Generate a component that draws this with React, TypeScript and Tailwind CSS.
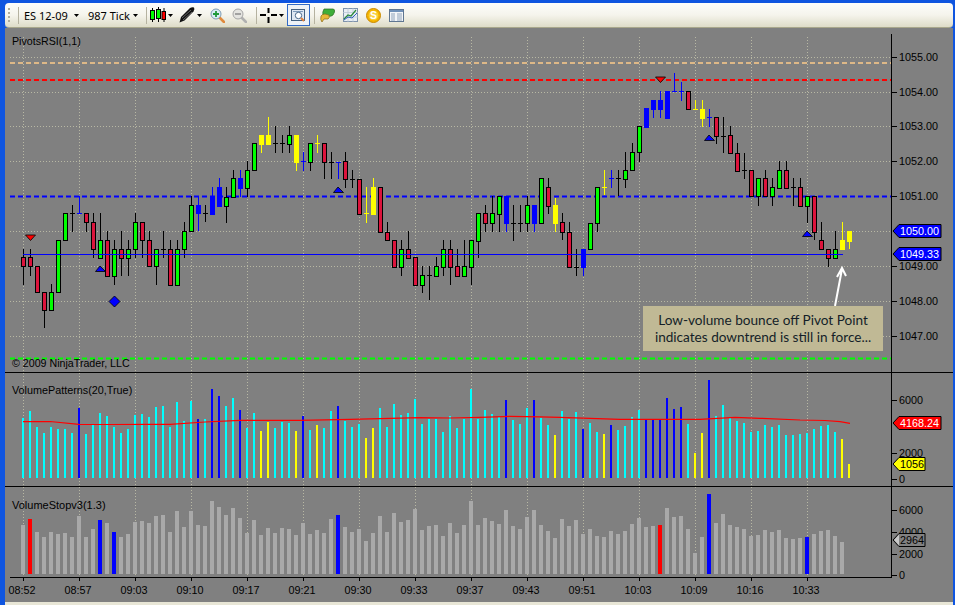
const gridX = Array.from({ length: 15 }, (_, k) => 23 + 56 * k);
const barX = (i: number) => 23 + 7 * i;

const times = ["08:52", "08:57", "09:03", "09:10", "09:17", "09:21", "09:30", "09:33", "09:37", "09:43", "09:51", "10:03", "10:09", "10:16", "10:33"];

const prices: [string, number][] = [
  ["1055.00", 57], ["1054.00", 92], ["1053.00", 126], ["1052.00", 161], ["1051.00", 196],
  ["1049.00", 266], ["1048.00", 301], ["1047.00", 336],
];

// high, body top, body bottom, low, colour. doji when top === bottom
type Candle = [number, number, number, number, "g" | "r" | "b" | "y" | "k"];
const candles: Candle[] = [
  [249, 257, 266, 285, "r"], [249, 257, 266, 276, "r"], [266, 266, 292, 292, "r"], [292, 292, 310, 328, "r"],
  [284, 292, 310, 310, "g"], [240, 240, 292, 292, "g"], [213, 213, 240, 240, "g"], [205, 213, 213, 232, "k"],
  [196, 213, 213, 213, "b"], [213, 213, 222, 232, "r"], [213, 222, 249, 258, "r"], [213, 240, 258, 258, "g"],
  [231, 240, 276, 276, "r"], [240, 249, 276, 285, "g"], [231, 249, 258, 276, "r"], [240, 249, 258, 276, "g"],
  [213, 222, 249, 258, "g"], [222, 222, 240, 258, "r"], [231, 240, 266, 266, "r"], [249, 249, 266, 285, "g"],
  [231, 249, 249, 258, "k"], [240, 249, 285, 285, "r"], [240, 249, 285, 285, "g"], [222, 231, 249, 258, "g"],
  [196, 205, 231, 231, "g"], [196, 205, 213, 231, "b"], [205, 213, 213, 222, "k"], [187, 196, 214, 214, "b"],
  [178, 187, 206, 206, "b"], [187, 197, 206, 223, "g"], [170, 178, 197, 197, "g"], [170, 178, 188, 197, "b"],
  [161, 170, 188, 197, "g"], [143, 143, 170, 170, "g"], [135, 135, 144, 153, "y"], [117, 135, 144, 144, "y"],
  [126, 143, 143, 153, "k"], [135, 143, 143, 153, "k"], [126, 135, 144, 153, "g"], [135, 135, 162, 171, "y"],
  [152, 161, 161, 171, "b"], [143, 143, 162, 171, "g"], [135, 143, 143, 153, "y"], [143, 143, 162, 179, "r"],
  [152, 162, 162, 179, "k"], [162, 162, 162, 179, "b"], [152, 161, 179, 188, "r"], [170, 179, 179, 188, "k"],
  [179, 179, 214, 214, "r"], [187, 213, 213, 223, "y"], [178, 187, 214, 214, "y"], [187, 187, 232, 232, "r"],
  [222, 232, 240, 240, "r"], [240, 240, 267, 267, "r"], [240, 249, 267, 276, "g"], [231, 249, 258, 258, "r"],
  [257, 257, 285, 285, "r"], [266, 275, 285, 293, "g"], [266, 275, 275, 300, "k"], [257, 266, 276, 276, "g"],
  [240, 249, 267, 276, "g"], [240, 249, 267, 285, "r"], [249, 266, 276, 276, "r"], [240, 266, 276, 276, "g"],
  [240, 240, 267, 285, "g"], [213, 213, 241, 258, "g"], [205, 213, 223, 232, "r"], [196, 213, 223, 232, "g"],
  [196, 196, 214, 232, "g"], [196, 196, 223, 232, "b"], [205, 223, 223, 241, "k"], [205, 223, 223, 232, "k"],
  [196, 205, 223, 232, "g"], [205, 205, 223, 232, "b"], [178, 178, 223, 223, "g"], [178, 187, 206, 214, "r"],
  [198, 205, 223, 232, "y"], [213, 222, 232, 240, "r"], [222, 232, 267, 267, "r"], [249, 267, 267, 276, "k"],
  [249, 249, 267, 276, "b"], [223, 223, 249, 249, "g"], [187, 187, 223, 232, "g"], [170, 187, 187, 195, "y"],
  [170, 178, 178, 188, "b"], [170, 178, 178, 196, "k"], [152, 170, 179, 188, "g"], [143, 152, 170, 170, "g"],
  [126, 126, 152, 162, "g"], [108, 108, 127, 127, "b"], [100, 100, 109, 118, "b"], [91, 100, 109, 118, "b"],
  [91, 91, 118, 118, "b"], [73, 91, 91, 91, "b"], [82, 91, 91, 101, "b"], [91, 91, 109, 109, "r"],
  [100, 109, 109, 109, "y"], [100, 109, 118, 127, "y"], [109, 117, 117, 127, "b"], [117, 117, 136, 144, "r"],
  [117, 136, 136, 153, "k"], [126, 135, 153, 153, "r"], [143, 153, 171, 171, "r"], [153, 170, 170, 179, "k"],
  [170, 170, 196, 196, "r"], [178, 178, 196, 206, "g"], [170, 178, 196, 196, "r"], [178, 187, 196, 206, "g"],
  [161, 170, 188, 188, "g"], [161, 170, 188, 188, "r"], [178, 187, 187, 206, "k"], [178, 187, 206, 206, "r"],
  [196, 196, 206, 223, "g"], [196, 196, 232, 240, "r"], [222, 240, 249, 249, "r"], [249, 249, 258, 267, "r"],
  [231, 249, 258, 258, "g"], [222, 240, 249, 249, "y"], [231, 231, 241, 249, "y"],
];

const volumes = [
  60, 67, 51, 45, 51, 49, 49, 45, 70, 44, 54, 65, 62, 51, 45, 49, 63, 64, 61, 71, 72, 51, 76, 57, 77, 59, 59, 89, 82, 72, 80, 68, 50, 65, 47, 56, 50, 56, 55, 47, 62, 48, 53,
  50, 67, 72, 57, 51, 54, 40, 50, 70, 51, 74, 63, 65, 79, 54, 59, 59, 46, 62, 50, 59, 89, 59, 68, 64, 61, 78, 58, 54, 70, 78, 60, 53, 43, 67, 59, 66, 49, 55, 46, 44, 53, 48, 52,
  61, 68, 58, 58, 59, 80, 69, 71, 54, 25, 45, 98, 62, 73, 60, 57, 55, 46, 47, 53, 51, 53, 43, 43, 44, 45, 49, 52, 53, 46, 39, 14,
];
const volumeBlue = [8, 25, 27, 28, 31, 40, 45, 69, 73, 80, 84, 89, 90, 91, 92, 93, 94, 98];
const volumeYellow = [34, 35, 39, 42, 49, 50, 76, 83, 96, 97, 117, 118];

const stops = [
  49, 55, 42, 37, 42, 40, 41, 37, 58, 37, 45, 54, 51, 42, 37, 40, 52, 53, 51, 58, 59, 42, 63, 47, 63, 49, 48, 73, 67, 59, 66, 56, 41, 54, 39, 46, 41, 46, 45, 39, 51, 40, 44,
  41, 55, 59, 47, 42, 45, 33, 41, 58, 42, 61, 52, 54, 65, 44, 48, 49, 38, 51, 41, 49, 73, 49, 56, 53, 50, 64, 48, 45, 57, 64, 49, 43, 36, 55, 48, 54, 40, 45, 38, 37, 43, 40, 43,
  50, 56, 47, 48, 49, 66, 57, 58, 45, 21, 37, 80, 51, 60, 49, 47, 45, 38, 39, 44, 42, 44, 36, 35, 36, 37, 40, 43, 44, 38, 32,
];
const stopRed = [1, 91];
const stopBlue = [11, 13, 45, 98, 112];

const smaLine =
  "23,421.7 50,421.5 79,424.3 110,424.5 150,424.3 170,424.3 205,422 240,420.3 300,420.3 350,419.3 380,418.7 420,417.7 450,418 480,417.3 510,416.3 540,416.8 560,417.3 590,418.3 620,419.3 660,419.3 700,419.3 735,417.3 760,418.3 800,420 825,420.5 840,421.7 850,423.3";

const fills = { g: "#00ff00", r: "#dc143c", b: "#0000ff", y: "#ffff00", k: "#000000" };

const axisFont = { fontFamily: '"Liberation Sans", Arial, sans-serif', fontSize: 10.8 };

function CandleBar({ c, i }: { c: Candle; i: number }) {
  const [hi, top, bot, lo, col] = c;
  const x = barX(i);
  const outlined = col === "g" || col === "r";
  const stroke = outlined || col === "k" ? "#000000" : fills[col];
  return (
    <g>
      <rect x={x} y={hi} width={1} height={lo - hi} fill={stroke} />
      {top === bot ? (
        <rect x={x - 2} y={top} width={5} height={1} fill={stroke} />
      ) : (
        <>
          <rect x={x - 2} y={top} width={5} height={bot - top + 1} fill={stroke} />
          {outlined && <rect x={x - 1} y={top + 1} width={3} height={bot - top - 1} fill={fills[col]} />}
        </>
      )}
    </g>
  );
}

function Flag({ y, w, fill, text, label, tip }: { y: number; w: number; fill: string; text: string; label: string; tip?: string }) {
  const x = 893;
  return (
    <g>
      <polygon
        points={`${x},${y} ${x + 6},${y - 6.5} ${x + w},${y - 6.5} ${x + w},${y + 6.5} ${x + 6},${y + 6.5}`}
        fill={fill}
        stroke="#000000"
      />
      {tip && <polygon points={`${x + 1},${y} ${x + 6},${y - 5.5} ${x + 6},${y + 5.5}`} fill={tip} />}
      <text x={x + 7} y={y + 4} fill={text} style={axisFont}>
        {label}
      </text>
    </g>
  );
}

function AxisTick({ y, label }: { y: number; label: string }) {
  return (
    <g>
      <rect x={892} y={y} width={5} height={1} fill="#000000" />
      <text x={899} y={y + 4} fill="#000000" style={axisFont}>
        {label}
      </text>
    </g>
  );
}

function Marker({ x, y, up }: { x: number; y: number; up: boolean }) {
  return up ? (
    <polygon points={`${x},${y} ${x + 5.5},${y + 5.5} ${x - 4.5},${y + 5.5}`} fill="#0000ff" stroke="#000000" strokeWidth={0.8} />
  ) : (
    <polygon points={`${x - 4.5},${y} ${x + 5.5},${y} ${x + 0.5},${y + 5.5}`} fill="#ff0000" stroke="#000000" strokeWidth={0.8} />
  );
}

function PricePanel() {
  return (
    <div className="relative h-[345px] border-b border-black">
      <svg width={948} height={344} viewBox="5 28 948 344" className="block">
        {gridX.map((x) => (
          <line key={x} x1={x + 0.5} y1={37} x2={x + 0.5} y2={372} stroke="#b8b8a4" strokeDasharray="1 2" />
        ))}
        {[57, 92, 126, 161, 231, 266, 301, 336].map((y) => (
          <line key={y} x1={10} y1={y + 0.5} x2={891} y2={y + 0.5} stroke="#b8b8a4" strokeDasharray="1 2" />
        ))}
        <line x1={10} y1={63} x2={891} y2={63} stroke="#deb887" strokeWidth={2} strokeDasharray="5 3" />
        <line x1={10} y1={80} x2={891} y2={80} stroke="#ff0000" strokeWidth={2} strokeDasharray="5 3" />
        <line x1={10} y1={196.5} x2={891} y2={196.5} stroke="#0000ff" strokeWidth={2} strokeDasharray="5 3" />
        <line x1={10} y1={358.5} x2={891} y2={358.5} stroke="#00ff00" strokeWidth={2} strokeDasharray="5 3" />
        {candles.map((c, i) => (
          <CandleBar key={i} c={c} i={i} />
        ))}
        <rect x={23} y={254} width={820} height={1} fill="#0000ff" />
        <Marker x={30} y={235} up={false} />
        <Marker x={100} y={266} up />
        <Marker x={338} y={187} up />
        <Marker x={660} y={77} up={false} />
        <Marker x={709} y={135} up />
        <Marker x={807} y={231} up />
        <polygon points="114.5,296 120,301.5 114.5,307 109,301.5" fill="#0000ff" stroke="#000000" strokeWidth={0.8} />
        <path d="M835 306 L842 269 M837 277 L842 268 L846 276" fill="none" stroke="#ffffff" strokeWidth={2} />
        <rect x={891} y={34} width={1} height={338} fill="#000000" />
        {prices.map(([label, y]) => (
          <AxisTick key={label} y={y} label={label} />
        ))}
        <Flag y={231} w={48} fill="#0000ff" text="#ffffff" label="1050.00" />
        <Flag y={254} w={48} fill="#0000ff" text="#ffffff" label="1049.33" />
      </svg>
      <div className="absolute left-[7px] top-[5px] text-[10.67px] text-black">PivotsRSI(1,1)</div>
      <div className="absolute left-[7px] top-[327px] text-[10.67px] text-black">© 2009 NinjaTrader, LLC</div>
      <div className="absolute left-[638px] top-[278px] flex h-[45px] w-[240px] flex-col items-center justify-center bg-[#c0b995] font-['Lato',sans-serif] text-[13.6px] leading-[17px] text-[#141e28]">
        <div>Low-volume bounce off Pivot Point</div>
        <div>indicates downtrend is still in force...</div>
      </div>
    </div>
  );
}

function VolumePanel() {
  return (
    <div className="relative h-[114px] border-b border-black">
      <svg width={948} height={113} viewBox="5 373 948 113" className="block">
        {gridX.map((x) => (
          <line key={x} x1={x + 0.5} y1={373} x2={x + 0.5} y2={486} stroke="#b8b8a4" strokeDasharray="1 2" />
        ))}
        {volumes.map((h, i) => (
          <rect
            key={i}
            x={barX(i) - 1}
            y={478 - h}
            width={2}
            height={h}
            fill={volumeBlue.includes(i) ? "#0000ff" : volumeYellow.includes(i) ? "#ffff00" : "#00ffff"}
          />
        ))}
        <polyline points={smaLine} fill="none" stroke="#ff0000" strokeWidth={1.2} />
        <rect x={891} y={373} width={1} height={113} fill="#000000" />
        <AxisTick y={400} label="6000" />
        <AxisTick y={453} label="2000" />
        <AxisTick y={479} label="0" />
        <Flag y={423} w={48} fill="#ff0000" text="#ffffff" label="4168.24" />
        <Flag y={464} w={32} fill="#ffff00" text="#000000" label="1056" />
      </svg>
      <div className="absolute left-[7px] top-[9px] text-[10.8px] text-black">VolumePatterns(20,True)</div>
    </div>
  );
}

function StopPanel() {
  return (
    <div className="relative h-[115px]">
      <svg width={948} height={115} viewBox="5 487 948 115" className="block">
        {gridX.map((x) => (
          <line key={x} x1={x + 0.5} y1={487} x2={x + 0.5} y2={577} stroke="#b8b8a4" strokeDasharray="1 2" />
        ))}
        {stops.map((h, i) => (
          <rect
            key={i}
            x={barX(i) - 2}
            y={574 - h}
            width={4}
            height={h}
            fill={stopRed.includes(i) ? "#ff0000" : stopBlue.includes(i) ? "#0000ff" : "#a9a9a9"}
          />
        ))}
        <rect x={10} y={577} width={882} height={1} fill="#000000" />
        <rect x={891} y={487} width={1} height={91} fill="#000000" />
        {gridX.map((x, k) => (
          <g key={x}>
            <rect x={x} y={578} width={1} height={3} fill="#000000" />
            <text x={x - 1} y={594} textAnchor="middle" fill="#000000" style={axisFont}>
              {times[k]}
            </text>
          </g>
        ))}
        <AxisTick y={510} label="6000" />
        <AxisTick y={532} label="4000" />
        <AxisTick y={554} label="2000" />
        <AxisTick y={575} label="0" />
        <Flag y={540} w={32} fill="#808080" text="#000000" label="2964" tip="#c8c8c8" />
      </svg>
      <div className="absolute left-[7px] top-[10px] text-[11px] text-black">VolumeStopv3(1.3)</div>
    </div>
  );
}

function Caret({ ml }: { ml: string }) {
  return (
    <svg width={5} height={3} viewBox="0 0 5 3" className={ml}>
      <polygon points="0,0 5,0 2.5,3" fill="#000000" />
    </svg>
  );
}

function Sep({ ml }: { ml: string }) {
  return <div className={`h-[17px] w-px bg-[#b5b2a0] ${ml}`} />;
}

function CandleIcon() {
  return (
    <svg width={16} height={16} viewBox="0 0 16 16" className="ml-[3px]">
      <path d="M2.5 1v14M8.5 0v15M14 1v14" stroke="#000000" fill="none" />
      <rect x={0.5} y={3.5} width={4} height={9} fill="#00ff00" stroke="#000000" />
      <rect x={6.5} y={2.5} width={4} height={9} fill="#00ff00" stroke="#000000" />
      <rect x={12} y={4.5} width={3.5} height={8} fill="#ff0000" stroke="#000000" />
    </svg>
  );
}

function PencilIcon() {
  return (
    <svg width={16} height={16} viewBox="0 0 16 16" className="ml-[6px]">
      <path d="M0.5 15.5 L2 10 L11 1 Q13 0 15 0.5 Q16 2 14.5 4.5 L5.5 13.5 Z" fill="#111111" />
      <path d="M3 11 L12 3 M4 13 L13 5" stroke="#8a8a8a" strokeWidth={0.7} fill="none" />
    </svg>
  );
}

function ZoomIcon({ gray, plus, ml }: { gray?: boolean; plus?: boolean; ml: string }) {
  return (
    <svg width={15} height={15} viewBox="0 0 15 15" className={ml}>
      <path d="M9 9 L14 14" stroke={gray ? "#b0b0b0" : "#e08a3c"} strokeWidth={2.6} strokeLinecap="round" />
      <circle cx={6} cy={6} r={5} fill={gray ? "#e4e4e0" : "#d9ecf6"} stroke={gray ? "#a6a6a6" : "#7d9bb4"} />
      {plus ? (
        <path d="M3 6h6M6 3v6" stroke="#1f9a3c" strokeWidth={1.8} />
      ) : (
        <path d="M3 6h6" stroke="#9a9a9a" strokeWidth={1.8} />
      )}
    </svg>
  );
}

function CrossIcon() {
  return (
    <svg width={17} height={15} viewBox="0 0 17 15" className="ml-[3px]">
      <path d="M0 7h6M11 7h6M8.5 0v5M8.5 9v6" stroke="#000000" strokeWidth={2} />
    </svg>
  );
}

function ActiveButton() {
  return (
    <div className="ml-[3px] flex h-[22px] w-[23px] items-center justify-center border border-[#316ac5] bg-[#eef2f6]">
      <svg width={15} height={13} viewBox="0 0 15 13">
        <rect x={0.5} y={0.5} width={13} height={11} fill="#dfe8f2" stroke="#44607e" />
        <rect x={2} y={2} width={10} height={1} fill="#7f9cbc" />
        <circle cx={7.5} cy={6.5} r={3.2} fill="#ffffff" stroke="#4a6a8c" />
        <path d="M10 9 L13 12" stroke="#e0803c" strokeWidth={2} />
      </svg>
    </div>
  );
}

function TalkIcon() {
  return (
    <svg width={15} height={15} viewBox="0 0 15 15" className="ml-[5px]">
      <path d="M4 1 H13 Q15 1 14.5 4 L13 7 Q11 9 8 8 L3 8 Q2 4 4 1Z" fill="#3fae3a" stroke="#2a6b20" strokeWidth={0.7} />
      <path d="M1 8 Q2 6 5 6 L9 7 Q10 10 8 11 L4 11 L2 14 Q0 12 1 8Z" fill="#e8b93a" stroke="#8a6a1c" strokeWidth={0.7} />
    </svg>
  );
}

function ChartIcon() {
  return (
    <svg width={15} height={14} viewBox="0 0 15 14" className="ml-[8px]">
      <rect x={0.5} y={0.5} width={14} height={13} fill="#e9eef4" stroke="#7f93ab" />
      <path d="M0 4.5h15M0 9h15M5 0v14M10 0v14" stroke="#b7c4d2" strokeWidth={0.7} />
      <path d="M1 11 L5 7 L8 8 L13 2" stroke="#2a8a3a" strokeWidth={1.2} fill="none" />
      <path d="M1 12 L5 9 L9 10 L14 5" stroke="#2f5fc0" strokeWidth={1} fill="none" />
    </svg>
  );
}

function CoinIcon() {
  return (
    <svg width={15} height={15} viewBox="0 0 15 15" className="ml-[8px]">
      <circle cx={7.5} cy={7.5} r={7} fill="#f4b400" stroke="#c98a00" />
      <circle cx={7.5} cy={7.5} r={4.8} fill="#f9cf3a" />
      <text x={7.5} y={11.2} textAnchor="middle" fill="#ffffff" fontFamily="Liberation Sans" fontWeight={700} fontSize={10.5}>
        S
      </text>
    </svg>
  );
}

function TableIcon() {
  return (
    <svg width={15} height={13} viewBox="0 0 15 13" className="ml-[8px]">
      <rect x={0.5} y={0.5} width={14} height={12} fill="#f3f5f8" stroke="#5f7691" />
      <rect x={1} y={1} width={13} height={2} fill="#6f90b8" />
      <path d="M2 5h4M8 5h5M2 7h4M8 7h5M2 9h4M8 9h5M2 11h4M8 11h5" stroke="#8fa3ba" />
    </svg>
  );
}

function Toolbar() {
  const label = "whitespace-nowrap text-[11px] leading-none text-black font-['Noto_Sans',sans-serif]";
  return (
    <div className="flex h-[25px] items-center rounded-[4px] border-b border-[#a8a78c] bg-gradient-to-b from-[#fdfdfb] via-[#f5f4ec] to-[#dedcc8] pl-[3px]">
      <div className="flex h-[15px] w-[3px] flex-col justify-between">
        {[0, 1, 2, 3].map((n) => (
          <div key={n} className="h-[2px] w-[2px] bg-[#b0ad9c]" />
        ))}
      </div>
      <Sep ml="ml-[7px]" />
      <div className={`ml-[5px] w-[44px] ${label}`}>ES 12-09</div>
      <Caret ml="ml-[6px]" />
      <div className={`ml-[9px] w-[40px] ${label}`}>987 Tick</div>
      <Caret ml="ml-[5px]" />
      <Sep ml="ml-[8px]" />
      <CandleIcon />
      <Caret ml="ml-[2px]" />
      <PencilIcon />
      <Caret ml="ml-[2px]" />
      <ZoomIcon plus ml="ml-[8px]" />
      <ZoomIcon gray ml="ml-[7px]" />
      <Sep ml="ml-[9px]" />
      <CrossIcon />
      <Caret ml="ml-[2px]" />
      <ActiveButton />
      <Sep ml="ml-[4px]" />
      <TalkIcon />
      <ChartIcon />
      <CoinIcon />
      <TableIcon />
    </div>
  );
}

export default function App() {
  return (
    <div className="flex h-[605px] w-[955px] flex-col overflow-hidden bg-[#0f55e0] pl-[5px] pr-[2px] pt-[3px] font-['Liberation_Sans',sans-serif]">
      <Toolbar />
      <div className="bg-[#808080]">
        <PricePanel />
        <VolumePanel />
        <StopPanel />
      </div>
      <div className="h-[3px] bg-[#e8e6d6]" />
    </div>
  );
}
